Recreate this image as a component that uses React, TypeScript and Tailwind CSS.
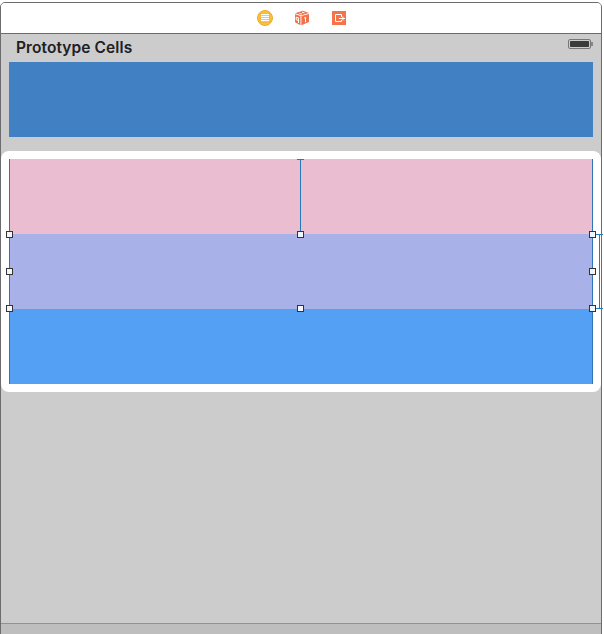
import React from "react";

function Handle({ className }: { className: string }) {
  return <span className={`absolute z-10 size-[7px] border border-[#333] bg-[#f3f5fc] ${className}`} />;
}

function TableIcon() {
  return (
    <svg width="16" height="16" viewBox="0 0 16 16">
      <circle cx="8" cy="8" r="7.5" fill="#fbc437" stroke="#eda92b" />
      <rect x="3.5" y="3.5" width="9" height="9" fill="#fff" stroke="#eeac2a" strokeWidth="0.8" />
      <path d="M4 5.5h8M4 7.5h8M4 9.5h8M4 11.5h8" stroke="#f3b63b" strokeWidth="0.8" />
    </svg>
  );
}

function ResponderIcon() {
  return (
    <svg width="16" height="16" viewBox="0 0 16 16">
      <path d="M1 3.2 8.8 .8 15 2.9 7.2 5.2z" fill="#f2704a" />
      <path d="M1 4.2 6.5 6v9.2L1 12.2z" fill="#f2704a" />
      <path d="M7.4 6 15 3.9v8.2l-7.6 3.1z" fill="#f2704a" />
      <path d="M2.2 7.2l2.2.6v2.7l-2.2-.8zM4.5 10v3M10 8.2l1.5-.9v4.9M5.5 3.5l2.3.5M8 2.2l2.5.6" fill="none" stroke="#fff" strokeWidth="1" />
    </svg>
  );
}

function ExitIcon() {
  return (
    <svg width="14" height="14" viewBox="0 0 14 14">
      <rect width="14" height="14" fill="#f5734b" />
      <path d="M9.5 6V3.5h-6v7h6V9M7 7.5h6M10.9 5.6v3.8" fill="none" stroke="#fff" />
    </svg>
  );
}

export default function App() {
  return (
    <div className="h-[634px] w-[604px] overflow-hidden bg-white pt-[2px] font-['Inter','Liberation_Sans',sans-serif]">
      <div className="relative flex h-[640px] w-[602px] flex-col rounded-t-[5px] border border-[#6c6c6f] bg-[#cccccc]">
        <header className="flex h-[31px] shrink-0 items-center justify-center gap-[21px] rounded-t-[4px] border-b border-[#6c6c6f] bg-white pl-[2px]">
          <TableIcon />
          <ResponderIcon />
          <div className="flex w-4 justify-center"><ExitIcon /></div>
        </header>
        <div className="flex h-7 shrink-0 items-start justify-between pl-[15px] pr-2">
          <span className="mt-[2px] whitespace-nowrap text-[15.5px] font-semibold leading-6 tracking-[0.09px] text-[#202022]">Prototype Cells</span>
          <svg className="mt-[5px]" width="25" height="10" viewBox="0 0 25 10">
            <rect x=".5" y=".5" width="22" height="9" rx="1.5" fill="#cccccc" stroke="#777" />
            <rect x="2" y="2" width="19" height="6" rx=".7" fill="#3b3b3b" />
            <path d="M23.5 3h1v4h-1z" fill="#444" />
          </svg>
        </div>
        <div className="mx-2 h-[75px] shrink-0 bg-[#4280c4]" />
        <section className="mt-[14px] h-[241px] shrink-0 rounded-lg bg-white px-2 py-2">
          <div className="relative flex h-[225px] flex-col">
            <div className="h-[75px] bg-[#ebbdd1]" />
            <div className="h-[75px] bg-[#a8b1e8]" />
            <div className="h-[75px] bg-[#53a0f5]" />
            <span className="absolute inset-y-0 left-0 w-px bg-[#2f76b8]" />
            <span className="absolute inset-y-0 right-0 w-px bg-[#2f76b8]" />
            <span className="absolute left-[291px] top-0 h-[75px] w-px bg-[#227ab8]" />
            <span className="absolute left-[288px] top-0 h-px w-[7px] bg-[#227ab8]" />
            <span className="absolute left-[587px] top-[75px] h-[75px] w-[7px] border-y border-[#227ab8]" />
            <span className="absolute left-[590px] top-[75px] h-[75px] w-px bg-[#227ab8]" />
            <Handle className="left-[-3px] top-[72px]" />
            <Handle className="left-[288px] top-[72px]" />
            <Handle className="right-[-3px] top-[72px]" />
            <Handle className="left-[-3px] top-[109px]" />
            <Handle className="right-[-3px] top-[109px]" />
            <Handle className="left-[-3px] top-[146px]" />
            <Handle className="left-[288px] top-[146px]" />
            <Handle className="right-[-3px] top-[146px]" />
          </div>
        </section>
        <div className="mt-[231px] h-[14px] shrink-0 border-t border-[#929292] bg-[#bebebe]" />
      </div>
    </div>
  );
}
